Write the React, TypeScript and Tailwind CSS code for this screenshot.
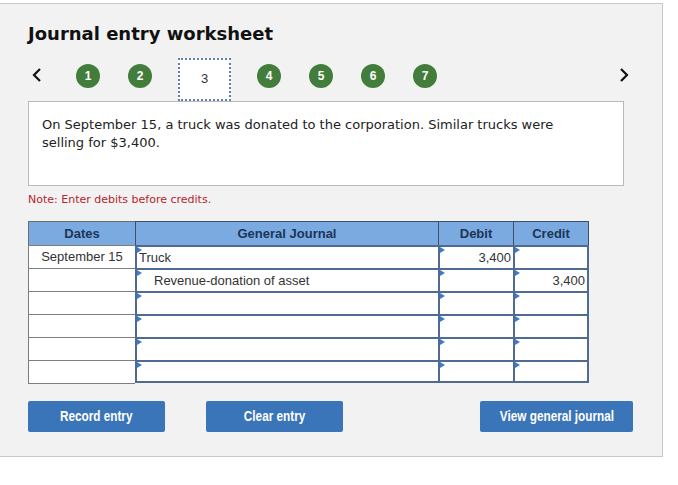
import React from "react";

const Tri = () => (
  <span className="absolute left-0 top-0 w-0 h-0 border-l-[5px] border-l-[#3c7bc8] border-y-[3px] border-y-transparent" />
);

type Row = { date: string; acct: string; indent: boolean; debit: string; credit: string };

const rows: Row[] = [
  { date: "September 15", acct: "Truck", indent: false, debit: "3,400", credit: "" },
  { date: "", acct: "Revenue-donation of asset", indent: true, debit: "", credit: "3,400" },
  { date: "", acct: "", indent: false, debit: "", credit: "" },
  { date: "", acct: "", indent: false, debit: "", credit: "" },
  { date: "", acct: "", indent: false, debit: "", credit: "" },
  { date: "", acct: "", indent: false, debit: "", credit: "" },
];

const Circle = ({ n }: { n: number }) => (
  <div className="mt-[6px] w-[24px] h-[24px] rounded-full bg-[#437d3c] text-white flex items-center justify-center text-[12px] font-bold [font-family:'Liberation_Sans',Arial,sans-serif]">
    {n}
  </div>
);

export default function App() {
  const arial = "[font-family:'Liberation_Sans',Arial,sans-serif]";
  const verdana = "[font-family:'DejaVu_Sans',Verdana,sans-serif]";
  const btn =
    "h-[31px] rounded-[2px] bg-[#3a74b9] text-white text-[14px] font-bold flex items-center justify-center [font-family:'Liberation_Sans',Arial,sans-serif]";
  return (
    <div className="w-[678px] h-[485px] bg-white pt-[3px]">
      <div className="w-[663px] h-[454px] bg-[#f2f2f2] border-t border-r border-b border-[#c9c9c9] pl-[28px] flex flex-col">
        <div className={`mt-[18px] h-[24px] leading-[24px] text-[18px] font-bold text-[#111] ${verdana}`}>
          Journal entry worksheet
        </div>
        <div className="mt-[12px] h-[43px] flex items-start">
          <svg className="mt-[9px] ml-[4px]" width="10" height="16" viewBox="0 0 10 16">
            <polyline points="8,2 2,8 8,14" fill="none" stroke="#111" strokeWidth="2.2" />
          </svg>
          <div className="ml-[34px] flex items-start gap-[28px]">
            <Circle n={1} />
            <Circle n={2} />
            <div className={`mx-[-2px] w-[53px] h-[43px] bg-white border-2 border-dotted border-[#5f7faa] flex items-start justify-center pt-[9px] text-[13px] text-[#333] ${arial}`}>
              3
            </div>
            <Circle n={4} />
            <Circle n={5} />
            <Circle n={6} />
            <Circle n={7} />
          </div>
          <svg className="mt-[9px] ml-[182px]" width="10" height="16" viewBox="0 0 10 16">
            <polyline points="2,2 8,8 2,14" fill="none" stroke="#111" strokeWidth="2.2" />
          </svg>
        </div>
        <div className={`w-[596px] h-[85px] bg-white border border-[#b9b9b9] px-[13px] pt-[14px] text-[13px] leading-[18px] text-[#222] ${verdana}`}>
          On September 15, a truck was donated to the corporation. Similar trucks were
          <br />
          selling for $3,400.
        </div>
        <div className={`mt-[7px] h-[14px] leading-[14px] text-[11px] text-[#b3262c] ${verdana}`}>
          Note: Enter debits before credits.
        </div>
        <div className={`mt-[14px] w-[561px] text-[13px] ${arial}`}>
          <div className="grid grid-cols-[107px_303px_75px_76px] h-[24px] bg-[#7aaae0] font-bold text-[#1c3558]">
            <div className="border-t border-l border-[#6d6d6d] flex items-center justify-center">Dates</div>
            <div className="border-t border-l border-[#3f4f66] flex items-center justify-center">General Journal</div>
            <div className="border-t border-l border-[#3f4f66] flex items-center justify-center">Debit</div>
            <div className="border-t border-l border-r border-[#3f4f66] flex items-center justify-center">Credit</div>
          </div>
          {rows.map((r, i) => (
            <div key={i} className="grid grid-cols-[107px_303px_75px_76px] h-[23px] text-[#333]">
              <div className="bg-white border-t border-l border-[#7d7d7d] flex items-center justify-center">
                {r.date}
              </div>
              <div className={`relative bg-white border-t-2 border-l-2 border-[#4f6b91] flex items-center ${r.indent ? "pl-[17px]" : "pl-[2px]"} ${i === rows.length - 1 ? "border-b-2" : ""}`}>
                <Tri />
                {r.acct}
              </div>
              <div className={`relative bg-white border-t-2 border-l-2 border-[#4f6b91] flex items-center justify-end pr-[2px] ${i === rows.length - 1 ? "border-b-2" : ""}`}>
                <Tri />
                {r.debit}
              </div>
              <div className={`relative bg-white border-t-2 border-l-2 border-r-2 border-[#4f6b91] flex items-center justify-end pr-[2px] ${i === rows.length - 1 ? "border-b-2" : ""}`}>
                <Tri />
                {r.credit}
              </div>
            </div>
          ))}
          <div className="w-[107px] border-t border-[#7d7d7d]" />
        </div>
        <div className="mt-[17px] flex items-start">
          <div className={`${btn} w-[137px]`}>
            <span className="inline-block scale-x-[0.84] whitespace-nowrap">Record entry</span>
          </div>
          <div className={`${btn} w-[137px] ml-[41px]`}>
            <span className="inline-block scale-x-[0.84] whitespace-nowrap">Clear entry</span>
          </div>
          <div className={`${btn} w-[153px] ml-[137px]`}>
            <span className="inline-block scale-x-[0.84] whitespace-nowrap">View general journal</span>
          </div>
        </div>
      </div>
    </div>
  );
}
